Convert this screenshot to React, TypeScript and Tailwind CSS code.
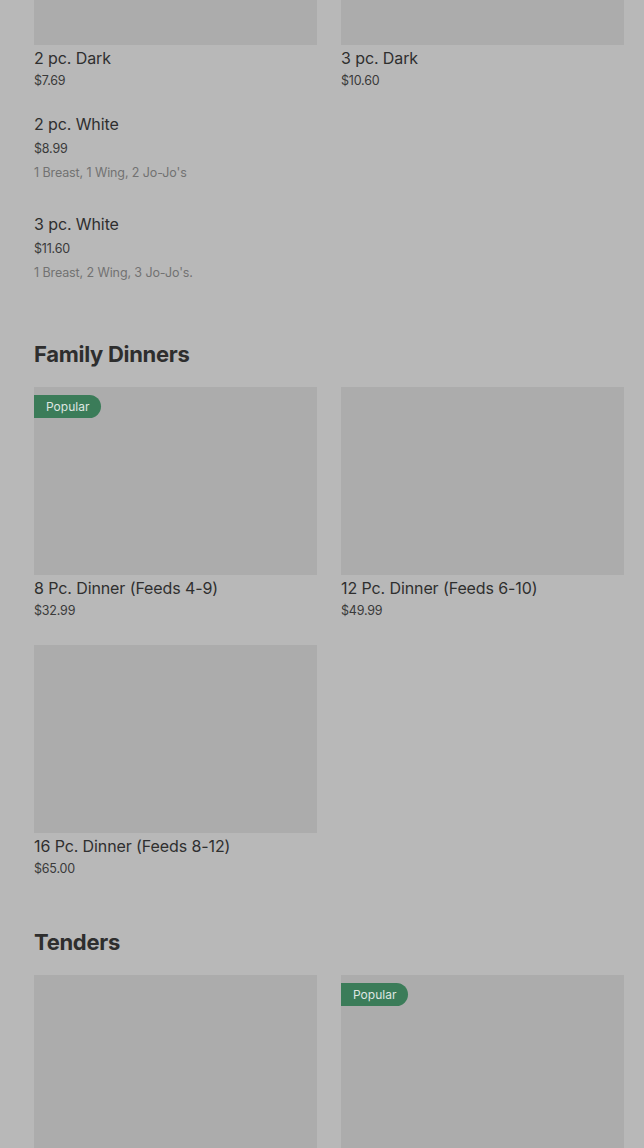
import React from "react";

const font = { fontFamily: "Inter, 'Noto Sans', sans-serif" };

function Badge() {
  return (
    <div className="absolute left-0 top-[8px] h-[23px] pl-[12px] pr-[12px] rounded-r-full bg-[#3b7c59] text-[#dfe6e1] text-[12px] leading-[23px]">
      Popular
    </div>
  );
}

function Card({ title, price, popular, h = 188 }: { title: string; price: string; popular?: boolean; h?: number }) {
  return (
    <div className="flex flex-col">
      <div className="relative bg-[#acacac]" style={{ height: h }}>
        {popular && <Badge />}
      </div>
      <div className="mt-[2px] text-[16px] leading-[22px] tracking-[-0.1px] text-[#2f2f2f]">{title}</div>
      <div className="mt-[2px] text-[12.5px] leading-[20px] tracking-[-0.2px] text-[#3a3a3a]">{price}</div>
    </div>
  );
}

function Plain({ title, price, desc }: { title: string; price: string; desc: string }) {
  return (
    <div className="flex flex-col">
      <div className="text-[16px] leading-[22px] tracking-[-0.1px] text-[#2f2f2f]">{title}</div>
      <div className="mt-[4px] text-[12.5px] leading-[20px] tracking-[-0.2px] text-[#3a3a3a]">{price}</div>
      <div className="mt-[4px] text-[12.5px] leading-[20px] tracking-[-0.1px] text-[#727272]">{desc}</div>
    </div>
  );
}

export default function App() {
  return (
    <div className="w-[644px] h-[1148px] overflow-hidden bg-[#b8b8b8] pl-[34px] pr-[20px]" style={font}>
      <div className="grid grid-cols-2 gap-x-[24px]">
        <Card title="2 pc. Dark" price="$7.69" h={45} />
        <Card title="3 pc. Dark" price="$10.60" h={45} />
      </div>
      <div className="mt-[22px] w-[283px] flex flex-col gap-[30px]">
        <Plain title="2 pc. White" price="$8.99" desc="1 Breast, 1 Wing, 2 Jo-Jo's" />
        <Plain title="3 pc. White" price="$11.60" desc="1 Breast, 2 Wing, 3 Jo-Jo's." />
      </div>

      <h2 className="mt-[57px] text-[22px] leading-[28px] font-bold tracking-[-0.3px] text-[#2e2e2e]">Family Dinners</h2>
      <div className="mt-[19px] grid grid-cols-2 gap-x-[24px] gap-y-[24px]">
        <Card title="8 Pc. Dinner (Feeds 4-9)" price="$32.99" popular />
        <Card title="12 Pc. Dinner (Feeds 6-10)" price="$49.99" />
        <Card title="16 Pc. Dinner (Feeds 8-12)" price="$65.00" />
      </div>

      <h2 className="mt-[49px] text-[22px] leading-[28px] font-bold tracking-[-0.3px] text-[#2e2e2e]">Tenders</h2>
      <div className="mt-[19px] grid grid-cols-2 gap-x-[24px]">
        <Card title="" price="" />
        <Card title="" price="" popular />
      </div>
    </div>
  );
}
